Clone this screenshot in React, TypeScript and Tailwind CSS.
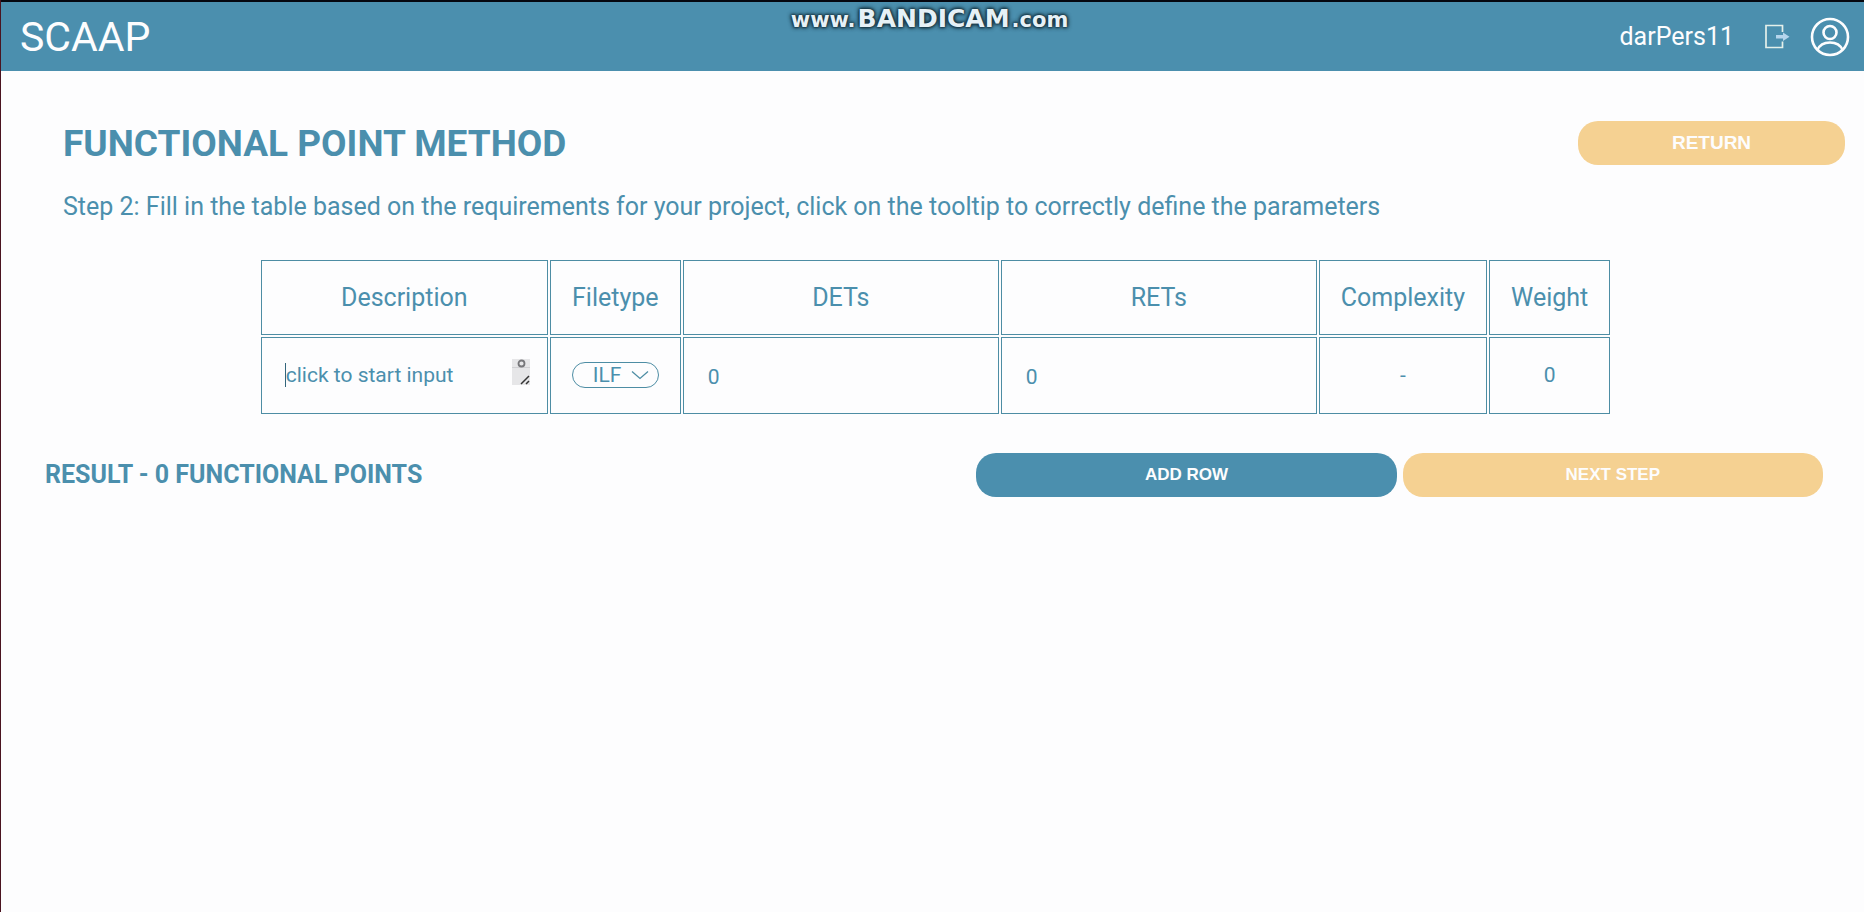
import { useState } from "react";

const cell = "border border-[#4d8da4] px-[21px] text-center align-middle font-normal";
const pill = "h-11 rounded-[20px] font-['Liberation_Sans',Arial,sans-serif] font-bold text-[#fdfdfe]";

function LogoutIcon() {
  return (
    <svg viewBox="0 0 26 26" className="h-[26px] w-[26px]" fill="none" aria-hidden="true">
      <path d="M18.500 8V1.500H2v22H18.500v-6" stroke="#e4f0ea" strokeWidth="1.700" />
      <path d="M12 11H19V8.500L25.500 12.800L19 17V14.500H12Z" fill="#b5d5ec" />
    </svg>
  );
}

function UserIcon() {
  return (
    <svg viewBox="0 0 40 40" className="h-10 w-10" fill="none" stroke="#fdfdfe" strokeWidth="2.600" aria-hidden="true">
      <circle cx="20" cy="20" r="18" />
      <circle cx="20" cy="15.500" r="6.500" />
      <path d="M7.500 33c2-5 6.800-7.500 12.500-7.500s10.500 2.500 12.500 7.500" />
    </svg>
  );
}

export default function App() {
  const [description, setDescription] = useState("");
  const [dets, setDets] = useState("0");
  const [rets, setRets] = useState("0");

  return (
    <div className="min-h-screen border-l border-[#4a1420] bg-[#fdfdfe] font-[Roboto,sans-serif] text-[#4b8fad]">
      <header className="relative flex h-[71px] items-center justify-between border-t-2 border-[#05070f] bg-[#4b8fae] pr-3.5 pl-[19px] text-[#fdfdfe]">
        <div className="text-[41px] leading-[48px]">SCAAP</div>
        <div className="absolute top-[3px] left-1/2 flex -translate-x-1/2 items-baseline gap-0.5 pr-1.5 font-['DejaVu_Sans',sans-serif] text-[21px] leading-7 font-bold text-[#e6f1f6] [text-shadow:0_0_2px_#16323f,0_0_3px_#16323f,0_0_4px_#16323f,0_0_5px_#16323f]">
          <span>www.</span>
          <span className="text-[25px] leading-7">BANDICAM</span>
          <span>.com</span>
        </div>
        <div className="flex items-center">
          <span className="mr-[30px] text-[25px]">darPers11</span>
          <button type="button" aria-label="Log out" className="mr-5">
            <LogoutIcon />
          </button>
          <button type="button" aria-label="Profile">
            <UserIcon />
          </button>
        </div>
      </header>

      <main>
        <div className="flex items-start justify-between pt-[50px] pr-[19px] pl-[62px]">
          <h1 className="text-[37px] leading-[46px] font-bold">FUNCTIONAL POINT METHOD</h1>
          <button type="button" className={`${pill} w-[267px] bg-[#f5d192] text-[19px]`}>
            RETURN
          </button>
        </div>
        <p className="mt-6 pl-[62px] text-[25px] leading-8">
          Step 2: Fill in the table based on the requirements for your project, click on the tooltip to correctly
          define the parameters
        </p>

        <div className="mt-[35px] pl-1.5">
          <table className="mx-auto border-separate border-spacing-0.5 text-[21px]">
            <thead>
              <tr className="h-[75px] text-[25px]">
                <th className={cell}>Description</th>
                <th className={cell}>Filetype</th>
                <th className={cell}>DETs</th>
                <th className={cell}>RETs</th>
                <th className={cell}>Complexity</th>
                <th className={cell}>Weight</th>
              </tr>
            </thead>
            <tbody>
              <tr className="h-[77px]">
                <td className={cell}>
                  <div className="-mr-1 flex w-[247px] items-center pb-0.5 pl-0.5">
                    <span className="h-6 w-px shrink-0 bg-[#33667c]" />
                    <textarea
                      aria-label="Description"
                      rows={1}
                      value={description}
                      onChange={(e) => setDescription(e.target.value)}
                      placeholder="click to start input"
                      className="block h-7 min-w-0 flex-1 resize-none overflow-hidden leading-7 outline-none placeholder:text-[#4b8fad]"
                    />
                    <svg viewBox="0 0 18 26" className="mb-1.5 h-[26px] w-[18px] shrink-0" fill="none" aria-hidden="true">
                      <path d="M0 0H18V26H0Z" fill="#e6e6e8" />
                      <path d="M0 8.500H18" stroke="#d0d0d3" />
                      <circle cx="9.500" cy="4.500" r="3" stroke="#77777a" strokeWidth="1.800" />
                      <path d="M9 25L17 17M14 25L17 22" stroke="#333" strokeWidth="1.500" />
                    </svg>
                  </div>
                </td>
                <td className={cell}>
                  <div className="relative mb-0.5">
                    <select
                      aria-label="Filetype"
                      className="block h-[26px] w-[87px] appearance-none rounded-full border border-[#4d8da4] pl-5 leading-6 outline-none"
                    >
                      <option>ILF</option>
                      <option>EIF</option>
                    </select>
                    <svg viewBox="0 0 18 10" className="pointer-events-none absolute top-2 right-2.5 h-2.5 w-[18px]" fill="none" aria-hidden="true">
                      <path d="M1 1.500L9 8.500L17 1.500" stroke="#4d8da4" strokeWidth="1.300" />
                    </svg>
                  </div>
                </td>
                <td className={cell}>
                  <input
                    aria-label="DETs"
                    value={dets}
                    onChange={(e) => setDets(e.target.value)}
                    className="mt-1 block w-[272px] pl-[3px] outline-none"
                  />
                </td>
                <td className={cell}>
                  <input
                    aria-label="RETs"
                    value={rets}
                    onChange={(e) => setRets(e.target.value)}
                    className="mt-1 block w-[272px] pl-[3px] outline-none"
                  />
                </td>
                <td className={cell}>-</td>
                <td className={cell}>0</td>
              </tr>
            </tbody>
          </table>
        </div>

        <div className="mt-[37px] grid grid-cols-[11fr_10fr] items-center pr-[41px] pl-11">
          <h2 className="text-[25px] leading-8 font-bold">RESULT - 0 FUNCTIONAL POINTS</h2>
          <div className="flex gap-1.5 text-[17px]">
            <button type="button" className={`${pill} flex-1 bg-[#4b8fae]`}>
              ADD ROW
            </button>
            <button type="button" className={`${pill} flex-1 bg-[#f5d192]`}>
              NEXT STEP
            </button>
          </div>
        </div>
      </main>
    </div>
  );
}
